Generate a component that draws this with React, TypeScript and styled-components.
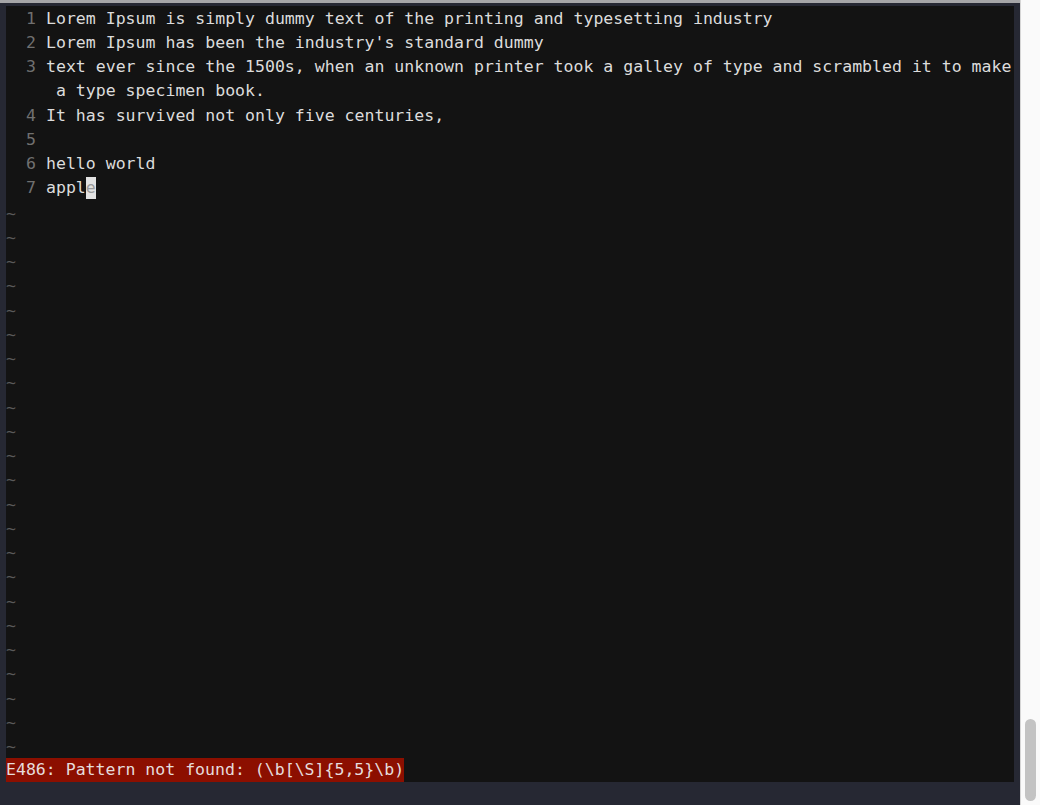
import React from "react";
import styled, { createGlobalStyle } from "styled-components";

const GlobalStyle = createGlobalStyle`
  html, body { margin: 0; padding: 0; background: #262833; }
  body { width: 1040px; height: 805px; overflow: hidden; }
`;

const Page = styled.div`
  display: flex;
  width: 1040px;
  height: 805px;
`;

const Frame = styled.div`
  flex: 0 0 1020px;
  box-sizing: border-box;
  background: #262833;
  border-top: 3px solid #a6a6a8;
  padding: 3px 6px 23px 6px;
  display: flex;
`;

const Editor = styled.div`
  flex: 1;
  background: #131313;
  display: flex;
  flex-direction: column;
  font-family: "DejaVu Sans Mono", "Liberation Mono", monospace;
  font-size: 16.55px;
  line-height: 24.25px;
  color: #dcdcdc;
  overflow: hidden;
`;

const Buffer = styled.div`
  flex: 1;
  display: flex;
  flex-direction: column;
`;

const Row = styled.div`
  display: flex;
  align-items: center;
  height: 24.25px;
  padding-top: 1px;
  box-sizing: border-box;
  white-space: pre;
`;

const Gutter = styled.span`
  flex: 0 0 auto;
  width: 40px;
  display: flex;
  justify-content: flex-end;
  padding-right: 10px;
  box-sizing: border-box;
  color: #707070;
`;

const Text = styled.span`
  color: #dcdcdc;
  display: flex;
  align-items: center;
`;

const Tilde = styled.span`
  color: #5a5a5a;
  padding-top: 2px;
`;

const Cursor = styled.span`
  display: inline-block;
  height: 22px;
  line-height: 22px;
  background: #e2e2e2;
  color: #9a9a9a;
`;

const StatusRow = styled.div`
  height: 24.25px;
  display: flex;
  white-space: pre;
`;

const ErrorMsg = styled.span`
  background: #8c0f00;
  color: #e6dcdc;
`;

const ScrollTrack = styled.div`
  flex: 1;
  background: #fafafa;
  border-left: 1px solid #d6d6d6;
  display: flex;
  flex-direction: column;
  justify-content: flex-end;
  align-items: center;
  padding-bottom: 4px;
`;

const Thumb = styled.div`
  width: 11px;
  height: 82px;
  border-radius: 6px;
  background: #c3c3c3;
`;

const lines: { n?: number; text: string }[] = [
  { n: 1, text: "Lorem Ipsum is simply dummy text of the printing and typesetting industry" },
  { n: 2, text: "Lorem Ipsum has been the industry's standard dummy" },
  { n: 3, text: "text ever since the 1500s, when an unknown printer took a galley of type and scrambled it to make" },
  { text: " a type specimen book." },
  { n: 4, text: "It has survived not only five centuries," },
  { n: 5, text: "" },
  { n: 6, text: "hello world" },
];

export default function App() {
  return (
    <>
      <GlobalStyle />
      <Page>
        <Frame>
          <Editor>
            <Buffer>
              {lines.map((l, i) => (
                <Row key={i}>
                  <Gutter>{l.n ?? ""}</Gutter>
                  <Text>{l.text}</Text>
                </Row>
              ))}
              <Row>
                <Gutter>7</Gutter>
                <Text>
                  appl<Cursor>e</Cursor>
                </Text>
              </Row>
              {Array.from({ length: 23 }).map((_, i) => (
                <Row key={"t" + i}>
                  <Tilde>~</Tilde>
                </Row>
              ))}
            </Buffer>
            <StatusRow>
              <ErrorMsg>{"E486: Pattern not found: (\\b[\\S]{5,5}\\b)"}</ErrorMsg>
            </StatusRow>
          </Editor>
        </Frame>
        <ScrollTrack>
          <Thumb />
        </ScrollTrack>
      </Page>
    </>
  );
}
